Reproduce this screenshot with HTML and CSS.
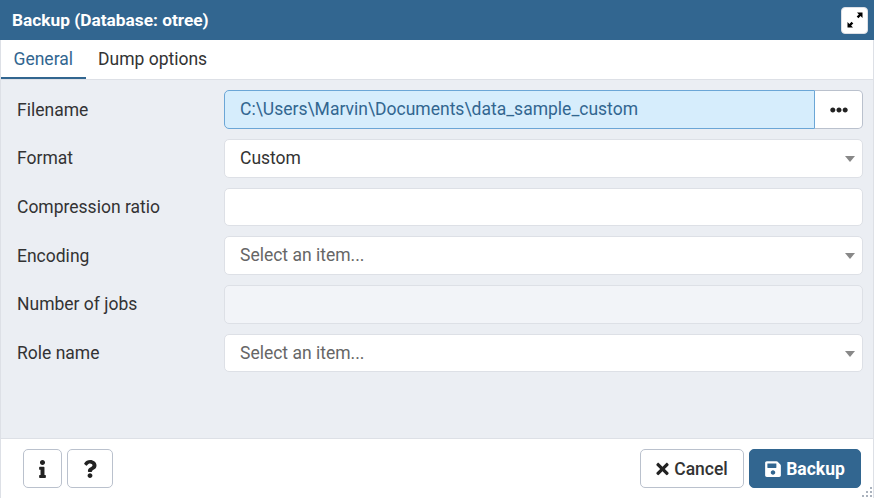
FILE: index.html
```html
<!DOCTYPE HTML>
<html lang="en">

<head>
    <meta charset="utf-8">
    <title>Backup (Database: otree)</title>
    <link rel="stylesheet" href="styles.css">
</head>

<body>
    <div class="dialog">
        <div class="titlebar">
            <span class="title">Backup (Database: otree)</span>
            <button class="maximize" type="button">
                <svg width="18" height="18" viewBox="0 0 18 18"><path d="M11 1.5H16.5V7L14.6 5.1L12.4 7.3L10.7 5.6L12.9 3.4ZM7 16.5H1.5V11L3.4 12.9L5.6 10.7L7.3 12.4L5.1 14.6Z" fill="#000"/></svg>
            </button>
        </div>

        <div class="tabs">
            <div class="tab active">General</div>
            <div class="tab">Dump options</div>
        </div>

        <div class="form">
            <div class="row">
                <label>Filename</label>
                <div class="file-group">
                    <div class="field filled">C:\Users\Marvin\Documents\data_sample_custom</div>
                    <button class="browse" type="button">
                        <svg width="18" height="18" viewBox="0 0 512 512"><path d="M328 256c0 39.8-32.2 72-72 72s-72-32.2-72-72 32.2-72 72-72 72 32.2 72 72zm104-72c-39.8 0-72 32.2-72 72s32.2 72 72 72 72-32.2 72-72-32.2-72-72-72zm-352 0c-39.8 0-72 32.2-72 72s32.2 72 72 72 72-32.2 72-72-32.2-72-72-72z" fill="#222"/></svg>
                    </button>
                </div>
            </div>
            <div class="row">
                <label>Format</label>
                <div class="field select">Custom</div>
            </div>
            <div class="row">
                <label>Compression ratio</label>
                <div class="field"></div>
            </div>
            <div class="row">
                <label>Encoding</label>
                <div class="field select placeholder">Select an item...</div>
            </div>
            <div class="row">
                <label>Number of jobs</label>
                <div class="field disabled"></div>
            </div>
            <div class="row">
                <label>Role name</label>
                <div class="field select placeholder">Select an item...</div>
            </div>
        </div>

        <div class="footer">
            <div class="footer-left">
                <button class="btn icon-btn" type="button">
                    <svg width="7" height="18" viewBox="0 0 192 512"><path d="M20 424.229h20V279.771H20c-11.046 0-20-8.954-20-20V212c0-11.046 8.954-20 20-20h112c11.046 0 20 8.954 20 20v212.229h20c11.046 0 20 8.954 20 20V492c0 11.046-8.954 20-20 20H20c-11.046 0-20-8.954-20-20v-47.771c0-11.046 8.954-20 20-20zM96 0C56.235 0 24 32.235 24 72s32.235 72 72 72 72-32.235 72-72S135.764 0 96 0z" fill="#222"/></svg>
                </button>
                <button class="btn icon-btn" type="button">
                    <svg width="14" height="18" viewBox="0 0 384 512"><path d="M202.021 0C122.202 0 70.503 32.703 29.914 91.026c-7.363 10.58-5.093 25.086 5.178 32.874l43.138 32.709c10.373 7.865 25.132 6.026 33.253-4.148 25.049-31.381 43.63-49.449 82.757-49.449 30.764 0 68.816 19.799 68.816 49.631 0 22.552-18.617 34.134-48.993 51.164-35.423 19.86-82.299 44.576-82.299 106.405V320c0 13.255 10.745 24 24 24h72.471c13.255 0 24-10.745 24-24v-5.773c0-42.86 125.268-44.645 125.268-160.627C377.504 66.256 286.902 0 202.021 0zM192 373.459c-38.196 0-69.271 31.075-69.271 69.271 0 38.195 31.075 69.27 69.271 69.27s69.271-31.075 69.271-69.271-31.075-69.27-69.271-69.27z" fill="#222"/></svg>
                </button>
            </div>
            <div class="footer-right">
                <button class="btn cancel" type="button">
                    <svg width="13" height="18" viewBox="0 0 352 512"><path d="M242.72 256l100.07-100.07c12.28-12.28 12.28-32.19 0-44.48l-22.24-22.24c-12.28-12.28-32.19-12.28-44.48 0L176 189.28 75.93 89.21c-12.28-12.28-32.19-12.28-44.48 0L9.21 111.45c-12.28 12.28-12.28 32.19 0 44.48L109.28 256 9.21 356.07c-12.28 12.28-12.28 32.19 0 44.48l22.24 22.24c12.28 12.28 32.2 12.28 44.48 0L176 322.72l100.07 100.07c12.28 12.28 32.2 12.28 44.48 0l22.24-22.24c12.28-12.28 12.28-32.19 0-44.48L242.72 256z" fill="#222"/></svg>
                    Cancel
                </button>
                <button class="btn primary" type="button">
                    <svg width="16" height="18" viewBox="0 0 448 512"><path d="M433.941 129.941l-83.882-83.882A48 48 0 0 0 316.118 32H48C21.49 32 0 53.49 0 80v352c0 26.51 21.49 48 48 48h352c26.51 0 48-21.49 48-48V163.882a48 48 0 0 0-14.059-33.941zM224 416c-35.346 0-64-28.654-64-64 0-35.346 28.654-64 64-64s64 28.654 64 64c0 35.346-28.654 64-64 64zm96-304.52V212c0 6.627-5.373 12-12 12H76c-6.627 0-12-5.373-12-12V108c0-6.627 5.373-12 12-12h228.52c3.183 0 6.235 1.264 8.485 3.515l3.48 3.48A11.996 11.996 0 0 1 320 111.48z" fill="#fff"/></svg>
                    Backup
                </button>
            </div>
        </div>

        <svg class="grip" width="12" height="12" viewBox="0 0 12 12"><path d="M9 1h2v2H9zM5 5h2v2H5zM9 5h2v2H9zM1 9h2v2H1zM5 9h2v2H5zM9 9h2v2H9z" fill="#aab2bd"/></svg>
    </div>
</body>

</html>
```

FILE: styles.css
```css
* {
    box-sizing: border-box;
}

body {
    font-family: Roboto, "Liberation Sans", sans-serif;
    font-size: 17.5px;
    color: #333;
    margin: 0;
    height: 100vh;
    overflow: hidden;
}

button {
    font-family: inherit;
    cursor: pointer;
}

.dialog {
    position: relative;
    height: 498px;
    display: flex;
    flex-direction: column;
    background-color: #ebeef3;
    border-left: 1px solid #dde0e6;
    border-right: 1px solid #dde0e6;
}

.titlebar {
    height: 40px;
    margin: 0 -1px;
    padding: 0 6px 0 12px;
    display: flex;
    justify-content: space-between;
    align-items: center;
    background-color: #326690;
    color: #fff;
}

.title {
    font-weight: 700;
    font-size: 17.3px;
}

.maximize {
    width: 27px;
    height: 27px;
    padding: 0;
    border: 1px solid #dde0e6;
    border-radius: 4px;
    background-color: #fff;
    display: flex;
    justify-content: center;
    align-items: center;
}

.tabs {
    height: 40px;
    display: flex;
    background-color: #fff;
    border-bottom: 1px solid #dde0e6;
}

.tab {
    padding: 0 12.5px;
    line-height: 38px;
    height: 39px;
}

.tab.active {
    color: #326690;
    border-bottom: 2px solid #326690;
}

.form {
    flex: 1;
    padding: 10.4px 10px 0 16px;
    display: flex;
    flex-direction: column;
    gap: 10px;
}

.row {
    height: 38.65px;
    display: flex;
    align-items: center;
}

.row label {
    width: 207px;
    flex-shrink: 0;
}

.field {
    flex: 1;
    height: 100%;
    padding: 0 15px;
    line-height: 36.65px;
    background-color: #fff;
    border: 1px solid #dde0e6;
    border-radius: 5px;
}

.field.placeholder {
    color: #666;
}

.field.disabled {
    background-color: #f2f4f8;
}

.select {
    position: relative;
}

.select::after {
    content: "";
    position: absolute;
    right: 7px;
    top: 16px;
    border-left: 5px solid transparent;
    border-right: 5px solid transparent;
    border-top: 6px solid #888;
}

.file-group {
    flex: 1;
    height: 100%;
    display: flex;
}

.field.filled {
    color: #326690;
    background-color: #d6edfc;
    border-color: #6ba6d6;
    border-radius: 5px 0 0 5px;
}

.browse {
    width: 48px;
    padding: 0;
    background-color: #fff;
    border: 1px solid #bac1cd;
    border-left: none;
    border-radius: 0 5px 5px 0;
    display: flex;
    justify-content: center;
    align-items: center;
}

.footer {
    height: 60px;
    padding: 10px 12px 0 22px;
    display: flex;
    justify-content: space-between;
    background-color: #fff;
    border-top: 1px solid #dde0e6;
}

.footer-left,
.footer-right {
    display: flex;
    gap: 5px;
}

.btn {
    height: 39px;
    font-size: 17.5px;
    font-weight: 500;
    color: #333;
    background-color: #fff;
    border: 1px solid #bac1cd;
    border-radius: 5px;
    display: flex;
    justify-content: center;
    align-items: center;
    gap: 5px;
    padding: 0;
}

.icon-btn {
    width: 39px;
}

.icon-btn + .icon-btn {
    width: 46px;
}

.cancel {
    width: 104px;
}

.primary {
    width: 112px;
    color: #fff;
    font-weight: 700;
    background-color: #326690;
    border-color: #326690;
}

.grip {
    position: absolute;
    right: 0;
    bottom: 0;
}
```
